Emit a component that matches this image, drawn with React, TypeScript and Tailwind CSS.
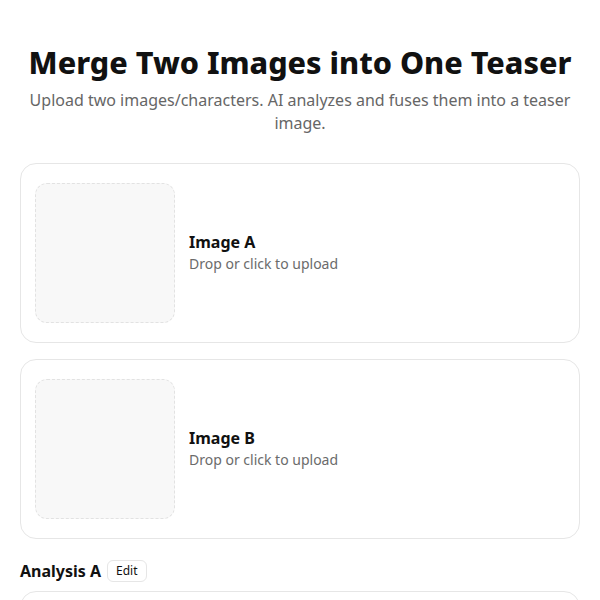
import React from 'react';

const slots = [
  { id: 'a', label: 'Image A' },
  { id: 'b', label: 'Image B' },
];

const UploadCard = ({ label }: { label: string }) => (
  <div className="flex items-center gap-[14px] rounded-2xl border border-[#e6e6e6] bg-white px-[14px] py-[19px]">
    <div className="h-[140px] w-[140px] shrink-0 rounded-xl border border-dashed border-[#e2e2e2] bg-[#f8f8f8]" />
    <div className="flex flex-col">
      <h3 className="text-[16px] font-bold leading-[22px] text-[#111]">{label}</h3>
      <p className="text-[14px] leading-[22px] text-[#6b6b6b]">Drop or click to upload</p>
    </div>
  </div>
);

export default function App() {
  return (
    <div className="min-h-screen bg-white px-5 pt-[40px] font-['Noto_Sans',sans-serif]">
      <h1 className="whitespace-nowrap text-center text-[30.5px] font-extrabold leading-[44px] text-[#111]">
        Merge Two Images into One Teaser
      </h1>
      <p className="mx-auto mt-[5px] text-center text-[16px] leading-[23px] text-[#666]">
        Upload two images/characters. AI analyzes and fuses them into a teaser image.
      </p>

      <div className="mt-[28px] flex flex-col gap-4">
        {slots.map((s) => (
          <UploadCard key={s.id} label={s.label} />
        ))}
      </div>

      <div className="mt-[21px] flex items-center gap-[6px]">
        <h2 className="text-[16px] font-bold leading-[22px] text-[#111]">Analysis A</h2>
        <button className="rounded-md border border-[#e6e6e6] bg-white px-2 py-[2px] text-[12px] leading-[16px] text-[#111]">
          Edit
        </button>
      </div>
      <div className="mt-[9px] h-[120px] rounded-2xl border border-[#e6e6e6] bg-white" />
    </div>
  );
}
